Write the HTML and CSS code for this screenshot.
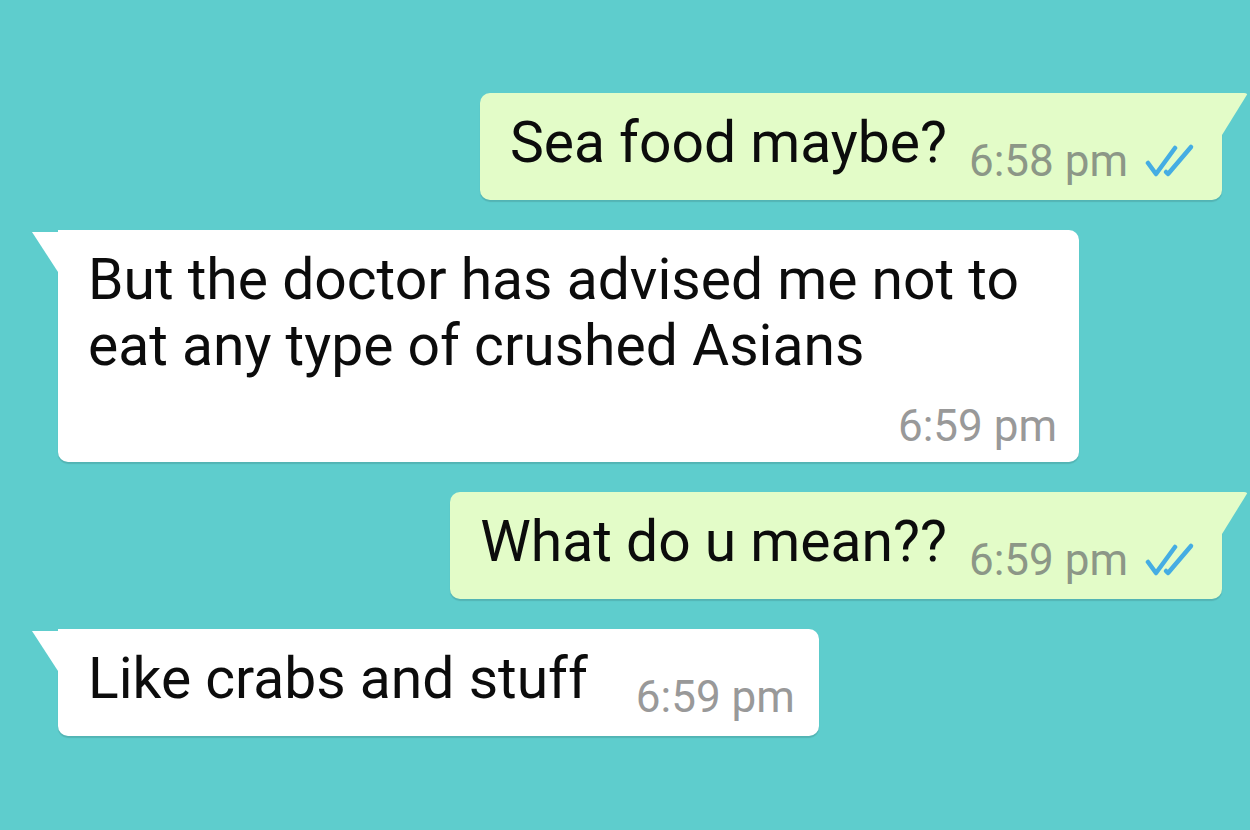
FILE: index.html
```html
<!DOCTYPE html>
<html lang="en">
<head>
    <meta charset="UTF-8">
    <meta name="viewport" content="width=device-width, initial-scale=1.0">
    <title>Chat</title>
    <link rel="stylesheet" href="styles.css">
</head>
<body>
    <div class="chat">
        <div class="bubble out">
            <div class="text">Sea food maybe?</div>
            <div class="meta">
                <span class="time">6:58 pm</span>
                <svg class="ticks" viewBox="0 0 50 36"><polyline points="3,20 11,31 30,5"/><polyline points="21,29 23,31 46,4"/></svg>
            </div>
        </div>
        <div class="bubble in multi">
            <div class="text">But the doctor has advised me not to eat any type of crushed Asians</div>
            <div class="meta">
                <span class="time">6:59 pm</span>
            </div>
        </div>
        <div class="bubble out">
            <div class="text">What do u mean??</div>
            <div class="meta">
                <span class="time">6:59 pm</span>
                <svg class="ticks" viewBox="0 0 50 36"><polyline points="3,20 11,31 30,5"/><polyline points="21,29 23,31 46,4"/></svg>
            </div>
        </div>
        <div class="bubble in">
            <div class="text">Like crabs and stuff</div>
            <div class="meta">
                <span class="time">6:59 pm</span>
            </div>
        </div>
    </div>
</body>
</html>
```

FILE: styles.css
```css
body {
    margin: 0;
    height: 830px;
    overflow: hidden;
    background-color: #5ecdcd;
    font-family: Roboto, "Noto Sans", sans-serif;
}

.chat {
    display: flex;
    flex-direction: column;
    gap: 30px;
    padding: 93px 28px 0 58px;
}

.bubble {
    position: relative;
    display: flex;
    align-items: flex-end;
    padding: 17px 24px 17px 30px;
    border-radius: 10px;
    box-shadow: 0 2px 1px rgba(0, 0, 0, 0.12);
}

.bubble::after {
    content: "";
    position: absolute;
    top: 0;
    width: 26px;
    height: 42px;
}

.out {
    align-self: flex-end;
    background-color: #e3fcc8;
    border-top-right-radius: 0;
    padding-right: 27px;
}

.out::after {
    right: -26px;
    background-color: #e3fcc8;
    clip-path: polygon(0 0, 100% 0, 0 100%);
    border-top-right-radius: 4px;
}

.in {
    align-self: flex-start;
    background-color: #fff;
    border-top-left-radius: 0;
}

.in::after {
    left: -26px;
    top: 2px;
    height: 40px;
    background-color: #fff;
    clip-path: polygon(0 0, 100% 0, 100% 100%);
}

.text {
    font-size: 57px;
    line-height: 66px;
    color: #0c0c0c;
    margin-bottom: 7px;
}

.meta {
    display: flex;
    align-items: center;
    gap: 17px;
    margin-left: 22px;
}

.in .meta {
    margin-left: 48px;
}

.time {
    font-size: 44px;
    line-height: 44px;
    color: #8c9787;
}

.in .time {
    color: #999;
}

.ticks {
    width: 50px;
    height: 36px;
    fill: none;
    stroke: #45ade3;
    stroke-width: 4.5;
    stroke-linecap: round;
    stroke-linejoin: round;
}

.multi {
    flex-direction: column;
    align-items: stretch;
    padding-right: 22px;
    padding-bottom: 14px;
}

.multi .text {
    max-width: 940px;
    padding-right: 29px;
    margin-bottom: 25px;
}

.multi .meta {
    align-self: flex-end;
}
```
